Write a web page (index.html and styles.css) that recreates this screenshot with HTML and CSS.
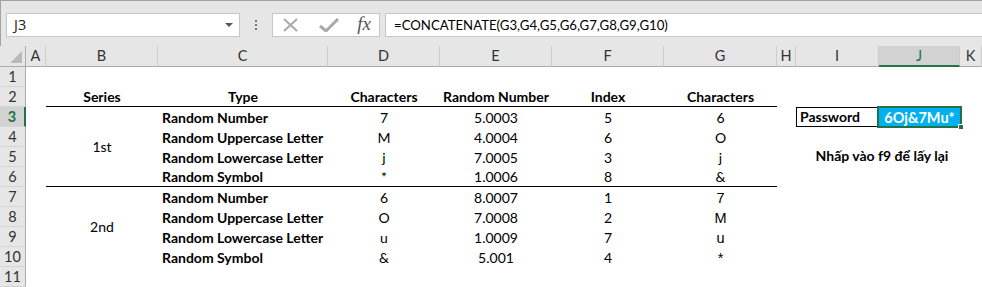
FILE: index.html
```html
<!DOCTYPE html>
<html lang="en">
<head>
    <meta charset="UTF-8">
    <title>Password Generator</title>
    <link rel="stylesheet" href="styles.css">
</head>
<body>
<div class="toolbar">
    <div class="name-box">
        <span>J3</span>
        <i class="drop"></i>
    </div>
    <div class="grip"><b></b><b></b><b></b></div>
    <div class="fx-buttons">
        <svg width="20" height="14" viewBox="0 0 20 14"><path d="M3 1 L16 13 M16 1 L3 13" stroke="#a9a9a9" stroke-width="2" fill="none"/></svg>
        <svg width="22" height="14" viewBox="0 0 22 14"><path d="M2 8 L8 13 L20 1" stroke="#a9a9a9" stroke-width="3" fill="none"/></svg>
        <span class="fx">fx</span>
    </div>
    <div class="formula">=CONCATENATE(G3,G4,G5,G6,G7,G8,G9,G10)</div>
</div>

<div class="sheet">
    <!-- column headers -->
    <div class="corner"><i></i></div>
    <div class="col-head">A</div>
    <div class="col-head">B</div>
    <div class="col-head">C</div>
    <div class="col-head">D</div>
    <div class="col-head">E</div>
    <div class="col-head">F</div>
    <div class="col-head">G</div>
    <div class="col-head">H</div>
    <div class="col-head">I</div>
    <div class="col-head active">J</div>
    <div class="col-head">K</div>

    <!-- row headers -->
    <div class="row-head" style="grid-row: 2">1</div>
    <div class="row-head" style="grid-row: 3">2</div>
    <div class="row-head active" style="grid-row: 4">3</div>
    <div class="row-head" style="grid-row: 5">4</div>
    <div class="row-head" style="grid-row: 6">5</div>
    <div class="row-head" style="grid-row: 7">6</div>
    <div class="row-head" style="grid-row: 8">7</div>
    <div class="row-head" style="grid-row: 9">8</div>
    <div class="row-head" style="grid-row: 10">9</div>
    <div class="row-head" style="grid-row: 11">10</div>
    <div class="row-head" style="grid-row: 12">11</div>

    <!-- table header (row 2) -->
    <div class="cell th ruled colB r2">Series</div>
    <div class="cell th ruled colC r2">Type</div>
    <div class="cell th ruled colD r2">Characters</div>
    <div class="cell th ruled colE r2">Random Number</div>
    <div class="cell th ruled colF r2">Index</div>
    <div class="cell th ruled colG r2">Characters</div>

    <!-- series 1st -->
    <div class="cell series ruled colB s1">1st</div>
    <div class="cell type colC r3">Random Number</div>
    <div class="cell type colC r4">Random Uppercase Letter</div>
    <div class="cell type colC r5">Random Lowercase Letter</div>
    <div class="cell type ruled colC r6">Random Symbol</div>
    <div class="cell colD r3">7</div>
    <div class="cell colD r4">M</div>
    <div class="cell colD r5">j</div>
    <div class="cell ruled colD r6">*</div>
    <div class="cell colE r3">5.0003</div>
    <div class="cell colE r4">4.0004</div>
    <div class="cell colE r5">7.0005</div>
    <div class="cell ruled colE r6">1.0006</div>
    <div class="cell colF r3">5</div>
    <div class="cell colF r4">6</div>
    <div class="cell colF r5">3</div>
    <div class="cell ruled colF r6">8</div>
    <div class="cell colG r3">6</div>
    <div class="cell colG r4">O</div>
    <div class="cell colG r5">j</div>
    <div class="cell ruled colG r6">&amp;</div>

    <!-- series 2nd -->
    <div class="cell series colB s2">2nd</div>
    <div class="cell type colC r7">Random Number</div>
    <div class="cell type colC r8">Random Uppercase Letter</div>
    <div class="cell type colC r9">Random Lowercase Letter</div>
    <div class="cell type colC r10">Random Symbol</div>
    <div class="cell colD r7">6</div>
    <div class="cell colD r8">O</div>
    <div class="cell colD r9">u</div>
    <div class="cell colD r10">&amp;</div>
    <div class="cell colE r7">8.0007</div>
    <div class="cell colE r8">7.0008</div>
    <div class="cell colE r9">1.0009</div>
    <div class="cell colE r10">5.001</div>
    <div class="cell colF r7">1</div>
    <div class="cell colF r8">2</div>
    <div class="cell colF r9">7</div>
    <div class="cell colF r10">4</div>
    <div class="cell arial colG r7">7</div>
    <div class="cell arial colG r8">M</div>
    <div class="cell arial colG r9">u</div>
    <div class="cell arial colG r10">*</div>

    <!-- password -->
    <div class="cell pw-label colI r3">Password</div>
    <div class="cell pw-value colJ r3">6Oj&amp;7Mu*<span class="selection"><i></i></span></div>
    <div class="cell hint colIJ r5">Nhấp vào f9 để lấy lại</div>
</div>
</body>
</html>
```

FILE: styles.css
```css
* {
    margin: 0;
    padding: 0;
    box-sizing: border-box;
}

body {
    font-family: Lato, "Liberation Sans", sans-serif;
    font-size: 14px;
    color: #000;
    background: #fff;
    width: 982px;
    height: 287px;
    overflow: hidden;
}

/* formula bar */
.toolbar {
    height: 46px;
    background: #e6e6e6;
    border-top: 1px solid #a3a3a3;
    border-left: 1px solid #a3a3a3;
    display: flex;
    align-items: center;
    padding-left: 5px;
    padding-top: 2px;
}

.name-box {
    width: 234px;
    height: 24px;
    background: #fff;
    border: 1px solid #c6c6c6;
    display: flex;
    align-items: center;
    justify-content: space-between;
    padding: 0 6px 0 7px;
    font-family: "Open Sans", sans-serif;
    font-size: 14.5px;
    color: #222;
}

.drop {
    width: 0;
    height: 0;
    border-left: 4px solid transparent;
    border-right: 4px solid transparent;
    border-top: 4px solid #555;
}

.grip {
    width: 32px;
    display: flex;
    flex-direction: column;
    align-items: center;
    gap: 2px;
}

.grip b {
    width: 2px;
    height: 2px;
    background: #777;
}

.fx-buttons {
    width: 108px;
    height: 24px;
    background: #fff;
    border: 1px solid #c6c6c6;
    display: flex;
    align-items: center;
    justify-content: space-between;
    padding: 0 8px 0 8px;
}

.fx {
    font-family: "Liberation Serif", serif;
    font-style: italic;
    font-size: 19px;
    color: #555;
    line-height: 1;
    padding-bottom: 2px;
}

.formula {
    flex: 1;
    height: 24px;
    margin-left: 5px;
    background: #fff;
    border: 1px solid #c6c6c6;
    border-right: none;
    padding-left: 8px;
    line-height: 22px;
    font-size: 13.2px;
}

/* grid */
.sheet {
    display: grid;
    grid-template-columns: 26px 20px 112px 170px 112px 112px 112px 113px 19px 83px 81px 22px;
    grid-template-rows: 21px repeat(11, 20px);
}

.corner {
    grid-row: 1;
    grid-column: 1;
    background: #e6e6e6;
    border-right: 1px solid #ababab;
    border-bottom: 1px solid #ababab;
    position: relative;
}

.corner i {
    position: absolute;
    right: 3px;
    bottom: 3px;
    width: 0;
    height: 0;
    border-left: 12px solid transparent;
    border-bottom: 12px solid #b9b9b9;
}

.col-head {
    grid-row: 1;
    background: #e6e6e6;
    border-right: 1px solid #cdcdcd;
    border-bottom: 1px solid #ababab;
    text-align: center;
    line-height: 20px;
    color: #333;
    font-size: 14.5px;
}

.col-head.active {
    background: #d2d2d2;
    color: #217346;
    border-bottom: 2px solid #217346;
}

.row-head {
    grid-column: 1;
    background: #e6e6e6;
    border-right: 1px solid #ababab;
    border-bottom: 1px solid #d4d4d4;
    text-align: center;
    line-height: 20px;
    color: #333;
    font-size: 14.5px;
}

.row-head.active {
    background: #d2d2d2;
    color: #217346;
    font-weight: bold;
    border-right: 2px solid #217346;
}

.cell {
    display: flex;
    align-items: flex-end;
    justify-content: center;
    line-height: 18px;
    white-space: nowrap;
}

.th, .type, .pw-label, .pw-value, .hint {
    font-weight: bold;
}

.type {
    justify-content: flex-start;
    padding-left: 4px;
}

.ruled {
    border-bottom: 1px solid #000;
}

.series {
    align-items: center;
}

.arial {
    font-family: "Liberation Sans", sans-serif;
    font-size: 14.5px;
}

.colB { grid-column: 3; }
.colC { grid-column: 4; }
.colD { grid-column: 5; }
.colE { grid-column: 6; }
.colF { grid-column: 7; }
.colG { grid-column: 8; }
.colI { grid-column: 10; }
.colJ { grid-column: 11; }
.colIJ { grid-column: 10 / 12; }

.r2 { grid-row: 3; }
.r3 { grid-row: 4; }
.r4 { grid-row: 5; }
.r5 { grid-row: 6; }
.r6 { grid-row: 7; }
.r7 { grid-row: 8; }
.r8 { grid-row: 9; }
.r9 { grid-row: 10; }
.r10 { grid-row: 11; }
.s1 { grid-row: 4 / 8; }
.s2 { grid-row: 8 / 12; }

.pw-label {
    justify-content: flex-start;
    padding-left: 3px;
    border: 1px solid #000;
    border-right: none;
}

.pw-value {
    background: #00b0f0;
    color: #fff;
    position: relative;
    font-size: 14.5px;
}

.selection {
    position: absolute;
    left: -2px;
    top: -1px;
    right: -2px;
    bottom: -1px;
    border: 2px solid #217346;
}

.selection i {
    position: absolute;
    right: -4px;
    bottom: -4px;
    width: 6px;
    height: 6px;
    background: #217346;
    border: 1px solid #fff;
}

.hint {
    align-items: center;
    padding-left: 8px;
    padding-bottom: 2px;
}
```
